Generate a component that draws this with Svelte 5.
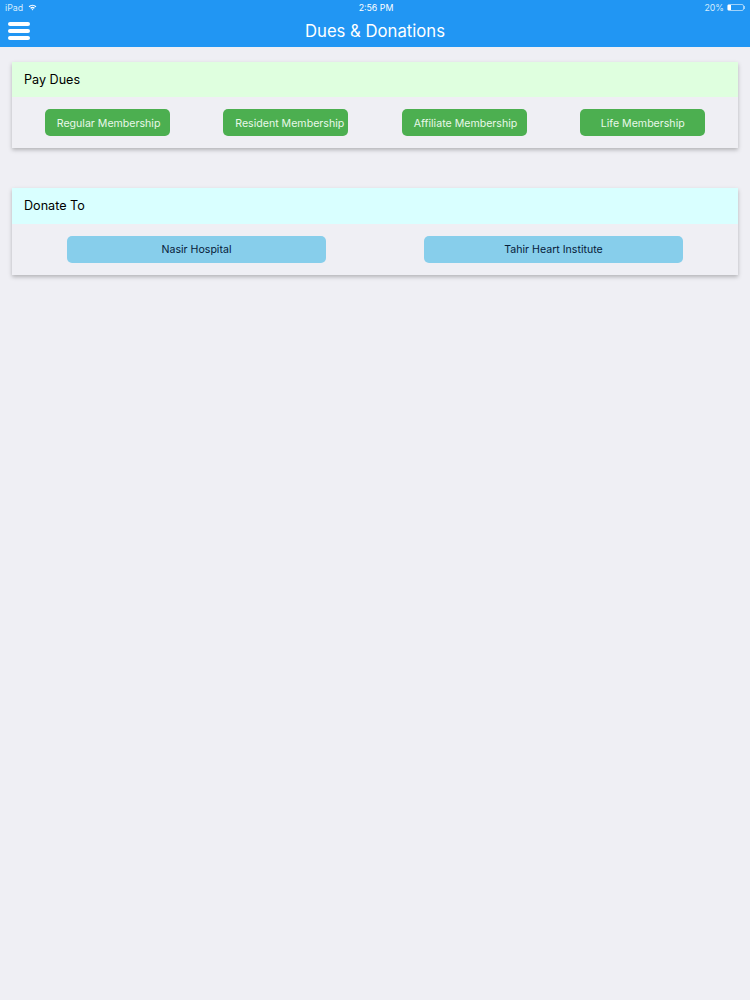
<script>
	const dues = ['Regular Membership', 'Resident Membership', 'Affiliate Membership', 'Life Membership'];
	const causes = ['Nasir Hospital', 'Tahir Heart Institute'];
</script>

<main>
	<header>
		<div class="status">
			<div class="status-left">
				<span>iPad</span>
				<svg width="9" height="7" viewBox="0 0 10 8" aria-hidden="true">
					<path d="M0.6 2.6 A6.4 6.4 0 0 1 9.4 2.6 L8.4 3.7 A5 5 0 0 0 1.6 3.7 Z" fill="#fff" />
					<path d="M2.3 4.4 A4 4 0 0 1 7.7 4.4 L6.7 5.5 A2.6 2.6 0 0 0 3.3 5.5 Z" fill="#fff" />
					<path d="M4 6.2 A1.5 1.5 0 0 1 6 6.2 L5 7.4 Z" fill="#fff" />
				</svg>
			</div>
			<span class="clock">2:56 PM</span>
			<div class="status-right">
				<span>20%</span>
				<div class="battery"><div class="charge"></div></div>
				<div class="nub"></div>
			</div>
		</div>
		<div class="nav">
			<button class="menu" aria-label="Menu">
				<span></span>
				<span></span>
				<span></span>
			</button>
			<h1>Dues &amp; Donations</h1>
		</div>
	</header>

	<section class="card">
		<h2 class="pay">Pay Dues</h2>
		<div class="actions">
			{#each dues as item}
				<button class="btn green">{item}</button>
			{/each}
		</div>
	</section>

	<section class="card">
		<h2 class="donate">Donate To</h2>
		<div class="actions">
			{#each causes as item}
				<button class="btn blue">{item}</button>
			{/each}
		</div>
	</section>
</main>

<style>
	:global(body) {
		background-color: #efeff4;
		font-family: Inter, 'Noto Sans', sans-serif;
	}

	main {
		min-height: 1000px;
		background-color: #efeff4;
	}

	header {
		height: 47px;
		background-color: #2196f3;
		color: #fff;
		position: relative;
	}

	.status {
		height: 15px;
		display: grid;
		grid-template-columns: 1fr auto 1fr;
		align-items: center;
		padding: 0 5px;
		font-size: 8.8px;
		color: #d6ecfd;
	}

	.status-left {
		display: flex;
		align-items: center;
		gap: 5px;
	}

	.status-right {
		display: flex;
		align-items: center;
		justify-content: flex-end;
		gap: 3px;
	}

	.clock {
		color: #fff;
		padding-left: 2px;
	}

	.battery {
		width: 17px;
		height: 7px;
		margin-right: 1px;
		border: 1px solid #9fd2fa;
		border-radius: 2px;
		box-sizing: border-box;
	}

	.charge {
		width: 3px;
		height: 100%;
		background-color: #fff;
	}

	.nub {
		width: 1px;
		height: 3px;
		margin-left: -4px;
		background-color: #9fd2fa;
	}

	.nav {
		height: 32px;
		display: flex;
		align-items: center;
		justify-content: center;
		position: relative;
	}

	h1 {
		margin: 0;
		font-size: 16.7px;
		font-weight: 400;
	}

	.menu {
		position: absolute;
		left: 8px;
		top: 7px;
		width: 22px;
		padding: 0;
		border: none;
		background: none;
		display: flex;
		flex-direction: column;
		gap: 3.5px;
	}

	.menu span {
		height: 3.5px;
		border-radius: 2px;
		background-color: #fff;
	}

	.card {
		margin: 15px 12px 0;
		background-color: #efeff4;
		box-shadow: 0 2px 4px rgba(0, 0, 0, 0.25);
	}

	.card + .card {
		margin-top: 40px;
	}

	h2 {
		margin: 0;
		height: 35px;
		padding: 0 12px;
		line-height: 35px;
		font-size: 12.6px;
		font-weight: 400;
		color: #000;
	}

	.pay {
		background-color: #dfffdf;
	}

	.donate {
		height: 36px;
		line-height: 35px;
		background-color: #d9ffff;
	}

	.actions {
		display: flex;
		justify-content: space-around;
		padding: 12px 6px;
	}

	.btn {
		height: 27px;
		padding: 0 12px;
		border: none;
		border-radius: 5px;
		box-sizing: border-box;
		white-space: nowrap;
		text-align: center;
		font-family: inherit;
		font-size: 10.6px;
	}

	.green {
		width: 125px;
		padding-top: 1px;
		background-color: #4caf50;
		color: #e8f8e8;
	}

	.blue {
		width: 259px;
		background-color: #87ceeb;
		color: #06203a;
	}
</style>
